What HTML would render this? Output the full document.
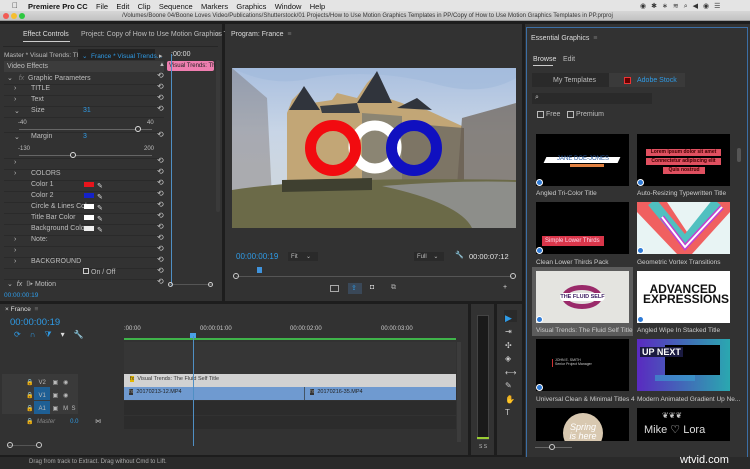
<!DOCTYPE html>
<html><head><meta charset="utf-8"><style>
*{margin:0;padding:0;box-sizing:border-box}
body{width:750px;height:469px;overflow:hidden;background:#1d1d1d;font-family:"Liberation Sans",sans-serif;font-size:7px;color:#bdbdbd;position:relative}
.a{position:absolute;white-space:nowrap}
.p{position:absolute;background:#323232}
.blue{color:#2f9be6}
.sw{position:absolute;width:10px;height:5px}
.r{position:absolute;left:157px;font-size:8px;color:#ccc;line-height:8px}
.sep{position:absolute;left:4px;width:160px;height:1px;background:#2a2a2a}
.th{position:absolute;background:#000}
.lb{position:absolute;font-size:6.5px;color:#ccc}
.badge{position:absolute;width:7px;height:7px;border-radius:50%;background:#2f7bd6;border:1px solid #fff}
</style></head><body>
<!-- menu bar -->
<div class="a" style="left:0;top:0;width:750px;height:11px;background:#e4e4e4"></div>
<div class="a" style="left:12px;top:1px;font-size:8px;color:#222">&#63743;</div>
<div class="a" style="left:28px;top:1.5px;font-size:7.5px;color:#111"><b>Premiere Pro CC</b>&nbsp;&nbsp;&nbsp;&nbsp;File&nbsp;&nbsp;&nbsp;&nbsp;Edit&nbsp;&nbsp;&nbsp;&nbsp;Clip&nbsp;&nbsp;&nbsp;&nbsp;Sequence&nbsp;&nbsp;&nbsp;&nbsp;Markers&nbsp;&nbsp;&nbsp;&nbsp;Graphics&nbsp;&nbsp;&nbsp;&nbsp;Window&nbsp;&nbsp;&nbsp;&nbsp;Help</div>
<div class="a" style="left:640px;top:1.5px;font-size:7px;color:#333;letter-spacing:5px">◉✱∗≋⌕◀◉☰</div>
<div class="a" style="left:0;top:11px;width:750px;height:10px;background:linear-gradient(#d6d6d6,#c3c3c3);border-bottom:1px solid #999"></div>
<div class="a" style="left:3px;top:13px;width:6px;height:6px;border-radius:50%;background:#f25b54"></div>
<div class="a" style="left:11px;top:13px;width:6px;height:6px;border-radius:50%;background:#f6be2f"></div>
<div class="a" style="left:19px;top:13px;width:6px;height:6px;border-radius:50%;background:#2dc840"></div>
<div class="a" style="left:122px;top:12.5px;font-size:6px;color:#333">/Volumes/Boone 04/Boone Loves Video/Publications/Shutterstock/01 Projects/How to Use Motion Graphics Templates in PP/Copy of How to Use Motion Graphics Templates in PP.prproj</div>

<!-- Effect controls -->
<div class="p" style="left:0;top:24px;width:222px;height:277px"></div>
<div class="a" style="left:23px;top:31px;color:#ddd">Effect Controls</div>
<div class="a" style="left:23px;top:41px;width:47px;height:1px;background:#ccc"></div>
<div class="a" style="left:81px;top:31px">Project: Copy of How to Use Motion Graphics Te</div>
<div class="a" style="left:216px;top:31px">»</div>
<div class="a" style="left:3px;top:46px;width:215px;height:1px;background:#262626"></div>
<div class="a" style="left:4px;top:52px;font-size:6.5px">Master * Visual Trends: Th...</div>
<div class="a" style="left:78px;top:49px;width:77px;height:11px;background:#222"></div>
<div class="a blue" style="left:82px;top:52px;font-size:6.5px">⌄&nbsp;&nbsp;France * Visual Trends...</div>
<div class="a" style="left:159px;top:52px">▸</div>
<div class="a" style="left:171px;top:51px;color:#ddd">:00:00</div>
<div class="a" style="left:4px;top:61px;width:160px;height:11px;background:#3c3c3c"></div>
<div class="a" style="left:7px;top:63px">Video Effects</div>
<div class="a" style="left:159px;top:62px;font-size:6px">▲</div>
<div class="a" style="left:167px;top:61px;width:47px;height:10px;background:#ef7eb0;border-radius:2px;color:#222;font-size:6px;padding:2px">Visual Trends: Th</div>
<div class="a" style="left:171px;top:54px;width:1px;height:232px;background:#4f8fc4"></div>
<div class="a" style="left:216px;top:60px;width:4px;height:152px;background:#3a3a3a;border-radius:2px"></div>
<div class="a" style="left:169px;top:284px;width:44px;height:1px;background:#555"></div>
<div class="a" style="left:168px;top:282px;width:5px;height:5px;border:1px solid #ccc;border-radius:50%"></div>
<div class="a" style="left:208px;top:282px;width:5px;height:5px;border:1px solid #ccc;border-radius:50%"></div>
<div class="sep" style="top:84px"></div><div class="sep" style="top:95px"></div><div class="sep" style="top:106px"></div><div class="sep" style="top:117px"></div><div class="sep" style="top:132px"></div><div class="sep" style="top:158px"></div><div class="sep" style="top:169px"></div><div class="sep" style="top:180px"></div><div class="sep" style="top:191px"></div><div class="sep" style="top:202px"></div><div class="sep" style="top:213px"></div><div class="sep" style="top:224px"></div><div class="sep" style="top:235px"></div><div class="sep" style="top:246px"></div><div class="sep" style="top:257px"></div><div class="sep" style="top:268px"></div><div class="sep" style="top:279px"></div>
<div class="a" style="left:7px;top:74px">⌄&nbsp;&nbsp;&nbsp;<i style="color:#777">fx</i>&nbsp;&nbsp;Graphic Parameters</div>
<div class="a" style="left:14px;top:85px">›</div><div class="a" style="left:31px;top:85px">TITLE</div>
<div class="a" style="left:14px;top:96px">›</div><div class="a" style="left:31px;top:96px">Text</div>
<div class="a" style="left:14px;top:107px">⌄</div><div class="a" style="left:31px;top:107px">Size</div><div class="a blue" style="left:83px;top:107px">31</div>
<div class="a" style="left:18px;top:120px;font-size:6px">-40</div><div class="a" style="left:147px;top:120px;font-size:6px">40</div>
<div class="a" style="left:19px;top:129px;width:133px;height:1px;background:#666"></div>
<div class="a" style="left:135px;top:126px;width:6px;height:6px;border:1px solid #ddd;border-radius:50%;background:#333"></div>
<div class="a" style="left:14px;top:133px">⌄</div><div class="a" style="left:31px;top:133px">Margin</div><div class="a blue" style="left:83px;top:133px">3</div>
<div class="a" style="left:18px;top:146px;font-size:6px">-130</div><div class="a" style="left:144px;top:146px;font-size:6px">200</div>
<div class="a" style="left:19px;top:155px;width:133px;height:1px;background:#666"></div>
<div class="a" style="left:70px;top:152px;width:6px;height:6px;border:1px solid #ddd;border-radius:50%;background:#333"></div>
<div class="a" style="left:14px;top:159px">›</div>
<div class="a" style="left:14px;top:170px">›</div><div class="a" style="left:31px;top:170px">COLORS</div>
<div class="a" style="left:31px;top:181px">Color 1</div><div class="sw" style="left:84px;top:182px;background:#e8141c"></div>
<div class="a" style="left:31px;top:192px">Color 2</div><div class="sw" style="left:84px;top:193px;background:#1422c8"></div>
<div class="a" style="left:31px;top:203px">Circle &amp; Lines Color</div><div class="sw" style="left:84px;top:204px;background:#fff"></div>
<div class="a" style="left:31px;top:214px">Title Bar Color</div><div class="sw" style="left:84px;top:215px;background:#fff"></div>
<div class="a" style="left:31px;top:225px">Background Color</div><div class="sw" style="left:84px;top:226px;background:#eee"></div>
<div class="a" style="left:97px;top:181px;line-height:11px;color:#ddd">✎<br>✎<br>✎<br>✎<br>✎</div>
<div class="a" style="left:14px;top:236px">›</div><div class="a" style="left:31px;top:236px">Note:</div>
<div class="a" style="left:14px;top:247px">›</div>
<div class="a" style="left:14px;top:258px">›</div><div class="a" style="left:31px;top:258px">BACKGROUND</div>
<div class="a" style="left:83px;top:268px;width:6px;height:6px;border:1px solid #ccc"></div><div class="a" style="left:91px;top:269px">On / Off</div>
<div class="a" style="left:7px;top:280px">⌄&nbsp;&nbsp;<i>fx</i>&nbsp;&nbsp;⌷▸&nbsp;Motion</div>
<div class="a blue" style="left:4px;top:292px;font-size:6.5px">00:00:00:19</div>
<div class="r" style="top:72px">⟲</div><div class="r" style="top:83px">⟲</div><div class="r" style="top:94px">⟲</div><div class="r" style="top:105px">⟲</div><div class="r" style="top:131px">⟲</div><div class="r" style="top:157px">⟲</div><div class="r" style="top:168px">⟲</div><div class="r" style="top:179px">⟲</div><div class="r" style="top:190px">⟲</div><div class="r" style="top:201px">⟲</div><div class="r" style="top:212px">⟲</div><div class="r" style="top:223px">⟲</div><div class="r" style="top:234px">⟲</div><div class="r" style="top:245px">⟲</div><div class="r" style="top:256px">⟲</div><div class="r" style="top:267px">⟲</div><div class="r" style="top:278px">⟲</div>

<!-- Program monitor -->
<div class="p" style="left:225px;top:24px;width:297px;height:277px"></div>
<div class="a" style="left:231px;top:31px;color:#ddd">Program: France&nbsp;&nbsp;<span style="color:#777">≡</span></div>
<div class="a" style="left:232px;top:68px;width:284px;height:160px;overflow:hidden;background:linear-gradient(#a9bfdf 0%,#c8d5e6 40%,#cdd6e0 65%)">
  <svg width="284" height="160" viewBox="0 0 284 160" style="position:absolute;left:0;top:0">
    <path d="M0 0 Q40 20 80 10 Q140 0 200 15 Q250 30 284 10 L284 0Z" fill="#a3bbdc" opacity=".7"/>
    <path d="M55 45 L60 32 L70 22 L80 35 L100 32 L105 25 L125 30 L135 15 L145 5 L155 30 L170 35 L180 40 L195 42 L230 58 L232 115 L55 118 Z" fill="#c2a676"/>
    <path d="M130 45 L170 48 L170 118 L130 118Z" fill="#8b8573"/>
    <path d="M170 55 L232 60 L232 115 L170 118Z" fill="#7d7565"/>
    <path d="M57 42 L72 18 L88 42Z M125 35 L145 3 L160 35Z M165 40 L185 30 L200 42Z" fill="#30343c"/>
    <path d="M88 38 L125 35 L128 45 L90 45Z" fill="#3a3e44"/>
    <path d="M0 0 L35 30 L40 130 L0 130Z" fill="#6a5c52" opacity=".35"/>
    <path d="M230 50 L284 35 L284 118 L225 118Z" fill="#6a5e52" opacity=".7"/>
    <path d="M0 122 Q90 108 284 112 L284 160 L0 160Z" fill="#6b6a48"/>
    <path d="M50 112 L140 110 L140 122 L50 124Z" fill="#3f4030"/>
    <path d="M150 118 Q230 112 284 114 L284 160 L240 160 Q228 135 150 118Z" fill="#8d8e8a"/>
    <circle cx="143" cy="79" r="21.5" fill="none" stroke="#fff" stroke-width="10"/>
    <circle cx="101" cy="80" r="22.5" fill="none" stroke="#f20b10" stroke-width="11"/>
    <circle cx="182" cy="80" r="22.5" fill="none" stroke="#1010c0" stroke-width="11"/>
  </svg>
</div>
<div class="a blue" style="left:236px;top:252px;font-size:8px">00:00:00:19</div>
<div class="a" style="left:288px;top:252px;width:30px;height:9px;background:#2a2a2a;font-size:6px;padding:1px 3px">Fit&nbsp;&nbsp;&nbsp;&nbsp;&nbsp;⌄</div>
<div class="a" style="left:414px;top:252px;width:30px;height:9px;background:#2a2a2a;font-size:6px;padding:1px 3px">Full&nbsp;&nbsp;&nbsp;&nbsp;⌄</div>
<div class="a" style="left:455px;top:251px;color:#ddd">🔧</div>
<div class="a" style="left:469px;top:252px;font-size:7.5px;color:#e5e5e5">00:00:07:12</div>
<div class="a" style="left:236px;top:276px;width:276px;height:1px;background:#555"></div>
<div class="a" style="left:233px;top:273px;width:6px;height:6px;border:1px solid #ccc;border-radius:50%"></div>
<div class="a" style="left:510px;top:273px;width:6px;height:6px;border:1px solid #ccc;border-radius:50%"></div>
<div class="a" style="left:257px;top:267px;width:5px;height:6px;background:#3f93dc"></div>
<div class="a" style="left:330px;top:285px;width:9px;height:7px;border:1px solid #aaa"></div>
<div class="a" style="left:348px;top:283px;width:14px;height:11px;background:#3a4858"></div>
<div class="a blue" style="left:351px;top:284px">⇪</div>
<div class="a" style="left:370px;top:284px;color:#ccc">◘</div>
<div class="a" style="left:391px;top:284px;color:#aaa">⧉</div>
<div class="a" style="left:503px;top:284px;color:#ddd">+</div>

<!-- Essential Graphics -->
<div class="p" style="left:525px;top:24px;width:225px;height:438px"></div>
<div class="a" style="left:526px;top:27px;width:222px;height:434px;border:1px solid #3b6ea5"></div>
<div class="a" style="left:531px;top:35px;color:#ddd">Essential Graphics&nbsp;&nbsp;<span style="color:#777">≡</span></div>
<div class="a" style="left:533px;top:56px;color:#ddd">Browse</div><div class="a" style="left:533px;top:65px;width:20px;height:1px;background:#ccc"></div>
<div class="a" style="left:563px;top:56px">Edit</div>
<div class="a" style="left:532px;top:73px;width:132px;height:14px;background:#2a2a2a"></div>
<div class="a" style="left:609px;top:73px;width:76px;height:14px;background:#3a3a3a"></div>
<div class="a" style="left:553px;top:77px">My Templates</div>
<div class="a" style="left:624px;top:77px;width:7px;height:7px;background:#600;border:1px solid #e33"></div>
<div class="a blue" style="left:637px;top:77px">Adobe Stock</div>
<div class="a" style="left:532px;top:93px;width:120px;height:11px;background:#2a2a2a"></div>
<div class="a" style="left:535px;top:94px;color:#ccc">⌕</div>
<div class="a" style="left:537px;top:111px;width:7px;height:7px;border:1px solid #bbb"></div><div class="a" style="left:546px;top:111px">Free</div>
<div class="a" style="left:567px;top:111px;width:7px;height:7px;border:1px solid #bbb"></div><div class="a" style="left:576px;top:111px">Premium</div>
<div class="a" style="left:737px;top:148px;width:4px;height:14px;background:#555;border-radius:2px"></div>
<!-- row 1 -->
<div class="th" style="left:536px;top:134px;width:93px;height:52px"></div>
<div class="a" style="left:545px;top:157px;width:74px;height:6px;background:#fff;transform:skewX(-25deg)"></div>
<div class="a" style="left:557px;top:156px;font-size:6px;color:#2a5ba0">JANE DOE-JONES</div>
<div class="a" style="left:570px;top:164px;width:34px;height:3px;background:#e08040"></div>
<div class="badge" style="left:536px;top:179px"></div>
<div class="lb" style="left:536px;top:190px">Angled Tri-Color Title</div>
<div class="th" style="left:637px;top:134px;width:93px;height:52px"></div>
<div class="a" style="left:646px;top:149px;width:75px;height:7px;background:#e05060;font-size:5px;color:#400;text-align:center;font-weight:bold">Lorem ipsum dolor sit amet</div>
<div class="a" style="left:646px;top:158px;width:75px;height:7px;background:#e05060;font-size:5px;color:#400;text-align:center;font-weight:bold">Connectetur adipiscing elit</div>
<div class="a" style="left:663px;top:167px;width:42px;height:7px;background:#e05060;font-size:5px;color:#400;text-align:center;font-weight:bold">Quis nostrud</div>
<div class="badge" style="left:637px;top:179px"></div>
<div class="lb" style="left:637px;top:190px">Auto-Resizing Typewritten Title</div>
<!-- row 2 -->
<div class="th" style="left:536px;top:202px;width:93px;height:52px"></div>
<div class="a" style="left:542px;top:236px;width:62px;height:10px;background:#d9364a;font-size:6px;color:#fde;padding:2px 3px">Simple Lower Thirds</div>
<div class="badge" style="left:536px;top:247px"></div>
<div class="lb" style="left:536px;top:259px">Clean Lower Thirds Pack</div>
<div class="th" style="left:637px;top:202px;width:93px;height:52px;overflow:hidden;background:#e8f4f4">
<svg width="93" height="52"><path d="M0 0 L30 0 L50 30 L75 0 L93 0 L93 10 L55 52 L40 52 L0 10Z" fill="#f06060"/><path d="M15 0 L48 40 L80 0" fill="none" stroke="#50c0c0" stroke-width="10"/><path d="M25 15 L48 45 L85 5" fill="none" stroke="#c040d0" stroke-width="5"/><path d="M25 15 L48 45 L85 5" fill="none" stroke="#fff" stroke-width="2"/></svg></div>
<div class="badge" style="left:637px;top:247px"></div>
<div class="lb" style="left:637px;top:259px">Geometric Vortex Transitions</div>
<!-- row 3 -->
<div class="a" style="left:532px;top:267px;width:101px;height:69px;background:#5c5c5c"></div>
<div class="th" style="left:536px;top:271px;width:93px;height:52px;background:#e4e4e0"></div>
<div class="a" style="left:562px;top:285px;width:40px;height:24px;border:5px solid #9a2a6a;border-radius:50%"></div>
<div class="a" style="left:560px;top:293px;width:45px;height:8px;background:#fff;border-radius:4px;font-size:5.5px;color:#3a1a60;font-weight:bold;text-align:center;line-height:8px">THE FLUID SELF</div>
<div class="badge" style="left:536px;top:316px"></div>
<div class="lb" style="left:536px;top:327px">Visual Trends: The Fluid Self Title</div>
<div class="th" style="left:637px;top:271px;width:93px;height:52px;background:#fff"></div>
<div class="a" style="left:643px;top:284px;font-size:12px;font-weight:bold;color:#111;line-height:10px;text-align:center;width:80px">ADVANCED<br>EXPRESSIONS</div>
<div class="badge" style="left:637px;top:316px"></div>
<div class="lb" style="left:637px;top:327px">Angled Wipe In Stacked Title</div>
<!-- row 4 -->
<div class="th" style="left:536px;top:339px;width:93px;height:52px"></div>
<div class="a" style="left:552px;top:359px;width:1px;height:8px;background:#c33"></div>
<div class="a" style="left:555px;top:358px;font-size:3.5px;color:#ccc">JOHN E. SMITH<br>Senior Project Manager</div>
<div class="badge" style="left:536px;top:384px"></div>
<div class="lb" style="left:536px;top:396px">Universal Clean &amp; Minimal Titles 4</div>
<div class="th" style="left:637px;top:339px;width:93px;height:52px;background:linear-gradient(90deg,#5a2ac0,#2aa8b0)"></div>
<div class="a" style="left:665px;top:345px;width:55px;height:30px;background:#000"></div>
<div class="a" style="left:640px;top:347px;font-size:9px;font-weight:bold;color:#fff;background:#1a1a40;padding:0 2px">UP NEXT</div>
<div class="a" style="left:655px;top:375px;width:40px;height:6px;background:#3aa0d0;opacity:.6"></div>
<div class="lb" style="left:637px;top:396px">Modern Animated Gradient Up Ne...</div>
<!-- row 5 -->
<div class="th" style="left:536px;top:408px;width:93px;height:33px;overflow:hidden"><div class="a" style="left:27px;top:5px;width:40px;height:40px;border-radius:50%;background:#d8c8b0;color:#fff;font-style:italic;font-size:9px;text-align:center;line-height:9px;padding-top:10px">Spring<br>is here</div></div>
<div class="th" style="left:637px;top:408px;width:93px;height:33px"><div class="a" style="left:7px;top:15px;font-size:11px;color:#ddd">Mike ♡ Lora</div><div class="a" style="left:25px;top:3px;font-size:8px;color:#ccc">❦❦❦</div></div>
<div class="a" style="left:535px;top:447px;width:37px;height:1px;background:#666"></div>
<div class="a" style="left:549px;top:444px;width:6px;height:6px;border:1px solid #ccc;border-radius:50%;background:#333"></div>

<!-- Timeline -->
<div class="p" style="left:0;top:304px;width:468px;height:151px"></div>
<div class="a" style="left:5px;top:306px;color:#ddd;font-size:6.5px">× France&nbsp;&nbsp;<span style="color:#777">≡</span></div>
<div class="a blue" style="left:10px;top:317px;font-size:9.5px">00:00:00:19</div>
<div class="a blue" style="left:14px;top:330px;font-size:8px;letter-spacing:9px">⟳∩<span>⧩</span><span style="color:#ddd">▾🔧</span></div>
<div class="a" style="left:124px;top:326px;font-size:6px;color:#ccc">:00:00</div>
<div class="a" style="left:200px;top:326px;font-size:6px;color:#ccc">00:00:01:00</div>
<div class="a" style="left:290px;top:326px;font-size:6px;color:#ccc">00:00:02:00</div>
<div class="a" style="left:381px;top:326px;font-size:6px;color:#ccc">00:00:03:00</div>
<div class="a" style="left:124px;top:338px;width:332px;height:2px;background:#3fb44a"></div>
<div class="a" style="left:124px;top:342px;width:332px;height:32px;background:#363636"></div>
<div class="a" style="left:190px;top:333px;width:6px;height:5px;background:#4aa0e8"></div>
<div class="a" style="left:124px;top:374px;width:332px;height:13px;background:#d2d2d2"></div>
<div class="a" style="left:130px;top:376px;font-size:5.5px;color:#333"><span style="background:#e6b800">fx</span>&nbsp;&nbsp;Visual Trends: The Fluid Self Title</div>
<div class="a" style="left:124px;top:387px;width:332px;height:13px;background:#6f9ad0"></div>
<div class="a" style="left:304px;top:387px;width:1px;height:13px;background:#456"></div>
<div class="a" style="left:129px;top:389px;font-size:5.5px;color:#222"><span style="background:#333;color:#888">fx</span>&nbsp;&nbsp;20170213-12.MP4</div>
<div class="a" style="left:310px;top:389px;font-size:5.5px;color:#222"><span style="background:#333;color:#888">fx</span>&nbsp;&nbsp;20170216-35.MP4</div>
<div class="a" style="left:124px;top:401px;width:332px;height:14px;background:#2c2c2c"></div>
<div class="a" style="left:124px;top:416px;width:332px;height:13px;background:#2c2c2c"></div>
<div class="a" style="left:2px;top:374px;width:76px;height:40px;background:#3a3a3a"></div>
<div class="a" style="left:34px;top:387px;width:16px;height:13px;background:#1e5f94"></div>
<div class="a" style="left:34px;top:401px;width:16px;height:13px;background:#1e5f94"></div>
<div class="a" style="left:26px;top:377px;font-size:6px;color:#bbb;line-height:13px">🔒&nbsp;&nbsp;&nbsp;V2&nbsp;&nbsp;&nbsp;&nbsp;▣&nbsp;&nbsp;&nbsp;◉<br>🔒&nbsp;&nbsp;&nbsp;V1&nbsp;&nbsp;&nbsp;&nbsp;▣&nbsp;&nbsp;&nbsp;◉<br>🔒&nbsp;&nbsp;&nbsp;A1&nbsp;&nbsp;&nbsp;&nbsp;▣&nbsp;&nbsp;&nbsp;M&nbsp;&nbsp;S<br>🔒&nbsp;&nbsp;<i style="color:#888">Master</i>&nbsp;&nbsp;&nbsp;&nbsp;&nbsp;&nbsp;&nbsp;&nbsp;&nbsp;<span class="blue">0.0</span>&nbsp;&nbsp;&nbsp;&nbsp;&nbsp;&nbsp;&nbsp;&nbsp;&nbsp;&nbsp;⋈</div>
<div class="a" style="left:193px;top:336px;width:1px;height:110px;background:#4f8fc4"></div>
<div class="a" style="left:7px;top:445px;width:30px;height:1px;background:#555"></div>
<div class="a" style="left:7px;top:442px;width:6px;height:6px;border:1px solid #ccc;border-radius:50%"></div>
<div class="a" style="left:36px;top:442px;width:6px;height:6px;border:1px solid #ccc;border-radius:50%"></div>
<div class="a" style="left:457px;top:342px;width:4px;height:100px;background:#3c3c3c"></div>
<!-- meter -->
<div class="p" style="left:471px;top:304px;width:23px;height:151px"></div>
<div class="a" style="left:477px;top:315px;width:12px;height:125px;background:#1a1a1a;border:1px solid #444"></div>
<div class="a" style="left:477px;top:437px;width:12px;height:2px;background:#9c3"></div>
<div class="a" style="left:479px;top:444px;font-size:5px">S S</div>
<!-- tools -->
<div class="p" style="left:497px;top:304px;width:25px;height:151px"></div>
<div class="a" style="left:504px;top:310px;width:13px;height:12px;background:#2a2a2a"></div>
<div class="a" style="left:505px;top:310px;color:#2f9be6;font-size:9px;line-height:16px">▶</div>
<div class="a" style="left:505px;top:325px;color:#ccc;font-size:8px;line-height:13.5px">⇥<br>✣<br>◈<br>⟷<br>✎<br>✋<br>T</div>
<!-- status -->
<div class="a" style="left:0;top:457px;width:750px;height:12px;background:#2a2a2a"></div>
<div class="a" style="left:29px;top:459px;font-size:6px;color:#aaa">Drag from track to Extract. Drag without Cmd to Lift.</div>
<div class="a" style="left:680px;top:454px;font-size:11px;color:#fff">wtvid.com</div>
</body></html>
